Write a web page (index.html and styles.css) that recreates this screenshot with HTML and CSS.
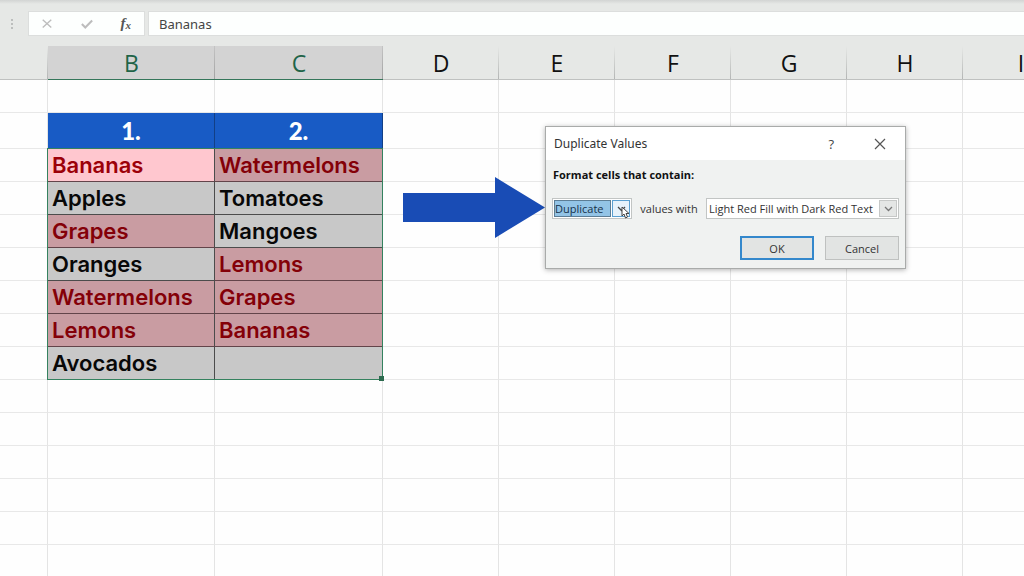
FILE: index.html
```html
<!DOCTYPE html>
<html lang="en">
<head>
    <meta charset="UTF-8">
    <meta name="viewport" content="width=device-width, initial-scale=1.0">
    <title>Duplicate Values</title>
    <link rel="stylesheet" href="styles.css">
</head>
<body>
    <div class="formula-bar">
        <svg class="grip" width="4" height="14" viewBox="0 0 4 14"><path d="M1 2h2v2H1zM1 6h2v2H1zM1 10h2v2H1z" fill="#bcbebd"/></svg>
        <div class="tools">
            <button aria-label="Cancel entry"><svg width="12" height="12" viewBox="0 0 14 14"><path d="M2 2l10 9M12 2L2 11" stroke="#bdbdbd" stroke-width="1.6" fill="none"/></svg></button>
            <button aria-label="Enter"><svg width="12" height="12" viewBox="0 0 14 14"><path d="M1 7l4 4 8-8" stroke="#bdbdbd" stroke-width="2.4" fill="none"/></svg></button>
            <button class="fx" aria-label="Insert function">f<span>x</span></button>
        </div>
        <input class="formula" type="text" value="Bananas" aria-label="Formula bar">
    </div>

    <main class="sheet">
        <table class="grid">
            <colgroup>
                <col class="col-a"><col class="col-b"><col class="col-c">
                <col><col><col><col><col><col>
            </colgroup>
            <thead>
                <tr>
                    <th></th><th class="active">B</th><th class="active">C</th>
                    <th>D</th><th>E</th><th>F</th><th>G</th><th>H</th><th>I</th>
                </tr>
            </thead>
            <tbody>
                <tr><td></td><td></td><td></td><td></td><td></td><td></td><td></td><td></td><td></td></tr>
                <tr class="titles"><td></td><td class="title">1.</td><td class="title">2.</td><td></td><td></td><td></td><td></td><td></td><td></td></tr>
                <tr><td></td><td class="item dup current">Bananas</td><td class="item dup">Watermelons</td><td></td><td></td><td></td><td></td><td></td><td></td></tr>
                <tr><td></td><td class="item">Apples</td><td class="item">Tomatoes</td><td></td><td></td><td></td><td></td><td></td><td></td></tr>
                <tr><td></td><td class="item dup">Grapes</td><td class="item">Mangoes</td><td></td><td></td><td></td><td></td><td></td><td></td></tr>
                <tr><td></td><td class="item">Oranges</td><td class="item dup">Lemons</td><td></td><td></td><td></td><td></td><td></td><td></td></tr>
                <tr><td></td><td class="item dup">Watermelons</td><td class="item dup">Grapes</td><td></td><td></td><td></td><td></td><td></td><td></td></tr>
                <tr><td></td><td class="item dup">Lemons</td><td class="item dup">Bananas</td><td></td><td></td><td></td><td></td><td></td><td></td></tr>
                <tr><td></td><td class="item">Avocados</td><td class="item"></td><td></td><td></td><td></td><td></td><td></td><td></td></tr>
                <tr><td></td><td></td><td></td><td></td><td></td><td></td><td></td><td></td><td></td></tr>
                <tr><td></td><td></td><td></td><td></td><td></td><td></td><td></td><td></td><td></td></tr>
                <tr><td></td><td></td><td></td><td></td><td></td><td></td><td></td><td></td><td></td></tr>
                <tr><td></td><td></td><td></td><td></td><td></td><td></td><td></td><td></td><td></td></tr>
                <tr><td></td><td></td><td></td><td></td><td></td><td></td><td></td><td></td><td></td></tr>
                <tr><td></td><td></td><td></td><td></td><td></td><td></td><td></td><td></td><td></td></tr>
            </tbody>
        </table>

        <div class="selection"><span class="handle"></span></div>

        <svg class="arrow" width="142" height="62" viewBox="0 0 142 62"><path d="M0 16h92V0l50 30.500L92 61V45H0z" fill="#194cb5"/></svg>

        <div class="dialog" role="dialog" aria-labelledby="dialog-title">
            <div class="dialog-head">
                <h1 id="dialog-title">Duplicate Values</h1>
                <button class="help" aria-label="Help">?</button>
                <button aria-label="Close"><svg width="12" height="12" viewBox="0 0 12 12"><path d="M1 1l10 10M11 1L1 11" stroke="#555" stroke-width="1.200" fill="none"/></svg></button>
            </div>
            <div class="dialog-body">
                <h2>Format cells that contain:</h2>
                <div class="rule">
                    <div class="combo focused">
                        <select id="kind" aria-label="Format cells that contain"><option>Duplicate</option><option>Unique</option></select>
                        <span class="drop"><svg width="9" height="6" viewBox="0 0 9 6"><path d="M1 1l3.500 3.500L8 1" stroke="#444" stroke-width="1.300" fill="none"/></svg></span>
                        <svg class="pointer" width="9" height="13" viewBox="0 0 9 13"><path d="M1 1v9l2-2 1.500 4 2-1-1.500-3.500h3z" fill="#fff" stroke="#444" stroke-width="1"/></svg>
                    </div>
                    <label for="format">values with</label>
                    <div class="combo wide">
                        <select id="format"><option>Light Red Fill with Dark Red Text</option></select>
                        <span class="drop"><svg width="9" height="6" viewBox="0 0 9 6"><path d="M1 1l3.500 3.500L8 1" stroke="#777" stroke-width="1.300" fill="none"/></svg></span>
                    </div>
                </div>
                <div class="actions">
                    <button class="ok">OK</button>
                    <button>Cancel</button>
                </div>
            </div>
        </div>
    </main>
</body>
</html>
```

FILE: styles.css
```css
* {
    box-sizing: border-box;
}

body {
    margin: 0;
    height: 100vh;
    overflow: hidden;
    background-color: #fefefe;
    font-family: "Open Sans", "Noto Sans", sans-serif;
    color: #111;
}

button {
    font-family: inherit;
    border: none;
    padding: 0;
    background: none;
}

/* Formula bar */
.formula-bar {
    display: flex;
    height: 46px;
    padding: 11px 0 10px 10px;
    background: linear-gradient(#d2d4d3, #e6e8e6 4px);
}

.grip {
    align-self: center;
    margin-right: 14px;
}

.tools {
    display: flex;
    justify-content: space-between;
    align-items: center;
    width: 117px;
    margin-right: 3px;
    padding: 0 13px 0 12px;
    background-color: #fdfffe;
    border: 1px solid #dcdedd;
}

.tools button {
    display: flex;
    align-items: center;
}

.tools .fx {
    font: italic bold 15px "Liberation Serif", serif;
    color: #555;
}

.fx span {
    font-size: 11px;
    padding-top: 3px;
}

.formula {
    flex: 1;
    min-width: 0;
    padding: 0 10px;
    border: 1px solid #dcdedd;
    border-right: none;
    background-color: #fdfffe;
    font: 13px "Noto Sans", sans-serif;
    color: #444;
}

/* Cells */
.sheet {
    position: relative;
    overflow: hidden;
}

.grid {
    width: 1079px;
    table-layout: fixed;
    border-collapse: separate;
    border-spacing: 0;
}

.col-a {
    width: 48px;
}

.col-b {
    width: 167px;
}

.col-c {
    width: 168px;
}

th {
    height: 34px;
    padding: 0;
    border-bottom: 1px solid #bfc1c0;
    background: linear-gradient(#e6e8e6, #b4b6b5) right / 1px 100% no-repeat #e6e8e6;
    font-size: 23px;
    line-height: 32px;
    font-weight: 400;
}

th.active {
    border-bottom-color: #35765a;
    background: linear-gradient(#c4c4c4, #a2a2a2) right / 1px 100% no-repeat #d3d3d3;
    color: #1f6448;
}

td {
    height: 33px;
    padding: 0 4px;
    border-right: 1px solid #e4e4e4;
    border-bottom: 1px solid #e8e8e8;
    font: 600 22px "Inter", sans-serif;
    line-height: 32px;
}

.titles td {
    height: 36px;
}

.titles .title {
    background-color: #185bc5;
    border-color: #123f86;
    color: #fff;
    font: 900 24px "Lato", sans-serif;
    line-height: 32px;
    text-align: center;
}

.item {
    background-color: #c8c8c8;
    border-color: #4c4c4c;
    color: #080808;
}

.dup {
    background-color: #c99ca2;
    border-bottom-color: #63444a;
    color: #840008;
}

.current {
    background-color: #ffc7cf;
    color: #9c0009;
}

.selection {
    position: absolute;
    left: 47px;
    top: 102px;
    width: 336px;
    height: 232px;
    border: 1px solid #35825f;
}

.handle {
    position: absolute;
    right: -2px;
    bottom: -2px;
    width: 5px;
    height: 5px;
    background-color: #2c6a4e;
}

.arrow {
    position: absolute;
    left: 403px;
    top: 131px;
}

/* Dialog */
.dialog {
    position: absolute;
    left: 545px;
    top: 80px;
    width: 361px;
    border: 1px solid #a9abaa;
    background-color: #f0f2f1;
    box-shadow: 0 1px 5px rgba(0, 0, 0, 0.3);
    font-size: 11px;
    color: #333;
}

.dialog-head {
    display: flex;
    align-items: center;
    height: 33px;
    padding: 0 19px 0 8px;
    background-color: #fff;
}

.dialog-head h1 {
    flex: 1;
    margin: 0;
    font: 400 12px "Noto Sans", sans-serif;
}

.dialog-head button {
    display: flex;
}

.help {
    margin-right: 40px;
    font-size: 13px;
    color: #444;
}

.dialog-body {
    padding: 7px 6px 8px;
}

.dialog-body h2 {
    margin: 0 1px 16px;
    font-size: 11px;
    line-height: 15px;
    font-weight: 700;
    color: #111;
}

.rule {
    display: flex;
    align-items: center;
    justify-content: space-between;
}

.combo {
    position: relative;
    display: flex;
    width: 80px;
    height: 21px;
    padding: 1px;
    border: 1px solid #c2c5c4;
    background-color: #fff;
}

.combo.wide {
    width: 193px;
}

.combo select {
    appearance: none;
    flex: 1;
    min-width: 0;
    padding: 0 1px;
    border: none;
    background: none;
    font: 11px "Open Sans", sans-serif;
    color: #333;
}

.combo.focused select {
    margin-right: 1px;
    padding: 0;
    border: 1px solid #5c7d95;
    background-color: #93c4e6;
    color: #16314a;
}

.drop {
    display: flex;
    align-items: center;
    justify-content: center;
    width: 18px;
    border: 1px solid #c6c8c7;
    background-color: #e4e6e5;
    pointer-events: none;
}

.focused .drop {
    border-color: #5a9fd0;
    background-color: #e6f2fb;
}

.pointer {
    position: absolute;
    right: 1px;
    bottom: -1px;
}

.actions {
    display: flex;
    justify-content: flex-end;
    gap: 11px;
    margin-top: 17px;
}

.actions button {
    width: 74px;
    height: 24px;
    border: 1px solid #bfc1c0;
    background-color: #e2e4e3;
    font-size: 11px;
    color: #333;
}

.actions .ok {
    border: 2px solid #3488cc;
}
```
